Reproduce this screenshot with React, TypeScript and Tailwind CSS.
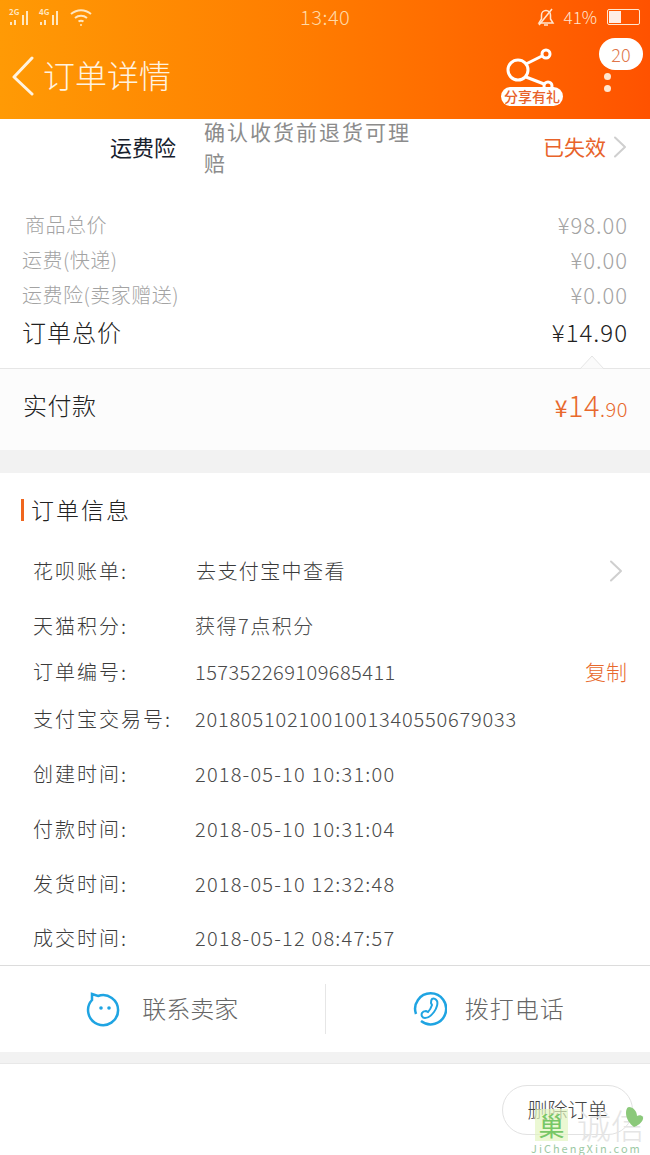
const font = { fontFamily: '"Noto Sans CJK SC", "Noto Sans", sans-serif' };

const priceRows = [
  { label: "商品总价", value: "¥98.00", pad: "pl-[25px]" },
  { label: "运费(快递)", value: "¥0.00", pad: "pl-[22px]" },
  { label: "运费险(卖家赠送)", value: "¥0.00", pad: "pl-[22px]" },
];

const infoRows = [
  { label: "天猫积分:", value: "获得7点积分", h: "h-[55px]", track: "tracking-[1.5px]" },
  { label: "订单编号:", value: "157352269109685411", h: "h-[38px]", track: "tracking-[0.45px]", copy: true },
  { label: "支付宝交易号:", value: "2018051021001001340550679033", h: "h-[55px]", track: "tracking-[0.8px]" },
  { label: "创建时间:", value: "2018-05-10 10:31:00", h: "h-[55px]", track: "tracking-[1.2px]" },
  { label: "付款时间:", value: "2018-05-10 10:31:04", h: "h-[55px]", track: "tracking-[1.2px]" },
  { label: "发货时间:", value: "2018-05-10 12:32:48", h: "h-[55px]", track: "tracking-[1.2px]" },
  { label: "成交时间:", value: "2018-05-12 08:47:57", h: "h-[54px]", track: "tracking-[1.2px]" },
];

const Chevron = ({ className }: { className?: string }) => (
  <svg className={className} width="14" height="22" viewBox="0 0 14 22" fill="none" stroke="#cfcfcf" strokeWidth="2" strokeLinecap="round" strokeLinejoin="round">
    <path d="M2 1.500 12 11 2 20.500" />
  </svg>
);

const Signal = ({ label }: { label: string }) => (
  <div className="relative flex h-[16px] w-[24px] items-end gap-[2px] pl-[1px]">
    <span className="absolute left-0 top-[-2px] text-[8px] font-bold leading-[10px] text-[#ffe6bf]">{label}</span>
    <i className="h-[3px] w-[2px] bg-[#ffe6bf]" />
    <i className="h-[5px] w-[2px] bg-[#ffe6bf]" />
    <i className="ml-[4px] h-[10px] w-[2px] bg-[#ffe6bf]" />
    <i className="h-[14px] w-[2px] bg-[#ffe6bf]" />
  </div>
);

const StatusBar = () => (
  <div className="flex h-[33px] items-center justify-between pl-[9px] pr-[10px] text-white">
    <div className="flex w-[90px] items-center gap-[6px]">
      <Signal label="2G" />
      <Signal label="4G" />
      <svg width="24" height="20" viewBox="0 0 24 20" fill="none" stroke="#ffe6bf" strokeWidth="2">
        <path d="M2 7c6-5 14-5 20 0" />
        <path d="M6 11c3.500-3 8.500-3 12 0" />
        <path d="M9.500 14.500c1.500-1 3.500-1 5 0" />
        <circle cx="12" cy="18" r="1" fill="#ffe6bf" stroke="none" />
      </svg>
    </div>
    <span className="ml-[201px] text-[20px] font-light tracking-[0.5px] text-[#ffd9a6]">13:40</span>
    <div className="ml-auto flex items-center gap-[8px]">
      <svg width="20" height="20" viewBox="0 0 20 20" fill="none" stroke="#ffe6d0" strokeWidth="1.500">
        <path d="M3 16h14l-2.500-4V8a4.500 4.500 0 0 0-9 0v4z" />
        <path d="M8 18h4" />
        <path d="M3 18 16 2" />
      </svg>
      <span className="text-[17px] font-light text-[#ffe6d0]">41%</span>
      <div className="ml-[2px] flex h-[16px] w-[33px] rounded-[2px] border border-[#ffe6d0] p-[1px]">
        <div className="w-[12px] bg-[#ffeee6]" />
      </div>
    </div>
  </div>
);

const Header = () => (
  <div className="h-[119px] bg-gradient-to-r from-[#ff9a05] via-[#ff7a00] to-[#ff5200]">
    <StatusBar />
    <div className="flex h-[86px] items-start">
      <svg className="ml-[11px] mt-[23px]" width="24" height="40" viewBox="0 0 24 40" fill="none" stroke="#fff3e0" strokeWidth="3" strokeLinecap="round" strokeLinejoin="round">
        <path d="M21 2 3 21l18 17" />
      </svg>
      <span className="ml-[8px] mt-[20px] text-[32px] font-light leading-[42px] text-[#fff3e0]">订单详情</span>
      <div className="relative ml-auto mr-[36px] mt-[13px] h-[60px] w-[62px]">
        <svg className="absolute left-[2px] top-0" width="58" height="46" viewBox="0 0 58 46" fill="none" stroke="#fff" strokeWidth="3">
          <circle cx="15" cy="24" r="10" />
          <circle cx="43" cy="8" r="4" />
          <circle cx="45" cy="40" r="4" />
          <path d="M23 18 39 10" />
          <path d="M23 31 41 38" />
        </svg>
        <span className="absolute bottom-0 left-0 h-[19px] w-[62px] whitespace-nowrap rounded-full bg-white text-center text-[14px] font-medium leading-[19px] text-[#e8622a]">分享有礼</span>
      </div>
      <div className="mr-[7px] mt-[5px] flex w-[44px] flex-col items-start">
        <span className="flex h-[32px] w-[44px] items-center justify-center rounded-full bg-white text-[18px] font-light text-[#e0764a]">20</span>
        <i className="ml-[5px] mt-[3px] block h-[7px] w-[7px] rounded-full bg-[#ffe6d0]" />
        <i className="ml-[5px] mt-[5px] block h-[7px] w-[7px] rounded-full bg-[#ffe6d0]" />
      </div>
    </div>
  </div>
);

const Freight = () => (
  <div className="flex h-[87px] items-start bg-white">
    <span className="ml-[110px] mt-[12px] text-[22px] leading-[30px] text-[#17202c]">运费险</span>
    <p className="ml-[28px] mt-[-3px] w-[215px] text-[21px] leading-[31px] tracking-[2px] text-[#8c8c8c]">确认收货前退货可理赔</p>
    <span className="ml-auto mt-[12px] text-[21px] leading-[30px] text-[#e8632a]">已失效</span>
    <Chevron className="ml-[7px] mr-[23px] mt-[17px]" />
  </div>
);

const Prices = () => (
  <div className="relative bg-white pt-px">
    {priceRows.map((row) => (
      <div key={row.label} className={`flex h-[35px] items-center justify-between pr-[22px] text-[20px] font-light tracking-[0.5px] text-[#a3a3a3] ${row.pad}`}>
        <span>{row.label}</span>
        <span className="text-[22px] tracking-[1px]">{row.value}</span>
      </div>
    ))}
    <div className="flex h-[39px] items-center justify-between pl-[22px] pr-[22px] text-[24px] font-light text-[#222]">
      <span className="tracking-[1px]">订单总价</span>
      <span className="tracking-[1px]">¥14.90</span>
    </div>
    <div className="h-[17px]" />
    <svg className="absolute bottom-[-1px] right-[45px]" width="26" height="14" viewBox="0 0 26 14" fill="none">
      <path d="M1 14 13 1l12 13z" fill="#fbfbfb" stroke="#e5e5e5" />
    </svg>
  </div>
);

const Paid = () => (
  <div className="flex h-[82px] items-center justify-between border-t border-[#e6e6e6] bg-[#fcfcfc] pb-[9px] pl-[23px] pr-[22px]">
    <span className="text-[24px] font-light tracking-[0.5px] text-[#222]">实付款</span>
    <span className="tracking-[0.5px] text-[#e8692c]">
      <span className="text-[23px]">¥</span>
      <span className="text-[29px] font-light">14</span>
      <span className="text-[20px] font-light">.90</span>
    </span>
  </div>
);

const OrderInfo = () => (
  <div className="bg-white">
    <div className="flex h-[70px] items-center pl-[21px] pt-[3px]">
      <i className="block h-[22px] w-[3px] bg-[#f0661e]" />
      <span className="ml-[7px] text-[23px] font-light tracking-[2px] text-[#222]">订单信息</span>
    </div>
    <div className="flex h-[55px] items-center pl-[33px] pr-[27px] font-light">
      <span className="w-[163px] text-[20px] tracking-[2px] text-[#3a3a3a]">花呗账单:</span>
      <span className="text-[20px] tracking-[1.4px] text-[#3a3a3a]">去支付宝中查看</span>
      <Chevron className="ml-auto" />
    </div>
    {infoRows.map((row) => (
      <div key={row.label} className={`flex items-center pl-[33px] pr-[23px] font-light ${row.h}`}>
        <span className="w-[162px] shrink-0 whitespace-nowrap text-[20px] tracking-[2px] text-[#3a3a3a]">{row.label}</span>
        <span className={`whitespace-nowrap text-[20px] text-[#4a4a4a] ${row.track}`}>{row.value}</span>
        {row.copy && <span className="ml-auto text-[21px] text-[#e8692c]">复制</span>}
      </div>
    ))}
  </div>
);

const Contact = () => (
  <div className="flex h-[87px] items-center border-t border-[#dcdcdc] bg-white">
    <div className="flex flex-1 items-center justify-center gap-[20px]">
      <svg width="36" height="36" viewBox="0 0 36 36" fill="none" stroke="#1fa4e2" strokeWidth="2.500">
        <path d="M6 3 12 5A15 15 0 1 1 6 9z" />
        <circle cx="15" cy="17" r="1.800" fill="#1fa4e2" stroke="none" />
        <circle cx="23" cy="17" r="1.800" fill="#1fa4e2" stroke="none" />
      </svg>
      <span className="mt-[-2px] text-[24px] font-light text-[#666]">联系卖家</span>
    </div>
    <i className="block h-[50px] w-px bg-[#e6e6e6]" />
    <div className="flex flex-1 items-center justify-center gap-[18px]">
      <svg width="36" height="36" viewBox="0 0 36 36" fill="none" stroke="#1fa4e2" strokeWidth="2.500">
        <path d="M10 30A15.500 15.500 0 1 0 5 23" />
        <path d="M21 8c2-1 4 0 5 2s0 7-3 11-6 6-9 6-4-3-3-5 3-2 4-2l2 1c2-2 3-4 4-7l-1-2c0-2 0-3 1-4z" strokeWidth="2" />
      </svg>
      <span className="mt-[-2px] text-[24px] font-light tracking-[1px] text-[#666]">拨打电话</span>
    </div>
  </div>
);

const Footer = () => (
  <div className="relative flex h-[91px] justify-end bg-white pr-[17px] pt-[21px]">
    <span className="flex h-[50px] w-[131px] items-center justify-center rounded-full border border-[#e2e2e2] text-[20px] font-light text-[#444]">删除订单</span>
    <div className="absolute left-[535px] top-[43px] flex items-center">
      <span className="flex h-[32px] w-[33px] items-center justify-center bg-[#e2f5c0]/70 text-[26px] leading-none text-[#77c766]">巢</span>
      <span className="ml-[9px] text-[34px] font-light leading-[36px] text-[#e5e5e5]">诚信</span>
    </div>
    <svg className="absolute left-[626px] top-[42px]" width="18" height="22" viewBox="0 0 18 22">
      <path d="M3 1c4 0 8 4 8 9 3-2 7 0 6 3-1 4-6 7-9 8C4 18 0 13 0 7c0-3 1-6 3-6z" fill="#8bc97a" />
    </svg>
    <span className="absolute left-[531px] top-[77px] whitespace-nowrap text-[11px] leading-[14px] tracking-[2px] text-[#9cc9a4]">JiChengXin.com</span>
  </div>
);

export default function App() {
  return (
    <div className="h-[1155px] w-[650px] overflow-hidden bg-white" style={font}>
      <Header />
      <Freight />
      <Prices />
      <Paid />
      <div className="h-[23px] bg-[#f2f2f2]" />
      <OrderInfo />
      <Contact />
      <div className="h-[12px] border-b border-[#e8e8e8] bg-[#f2f2f2]" />
      <Footer />
    </div>
  );
}
